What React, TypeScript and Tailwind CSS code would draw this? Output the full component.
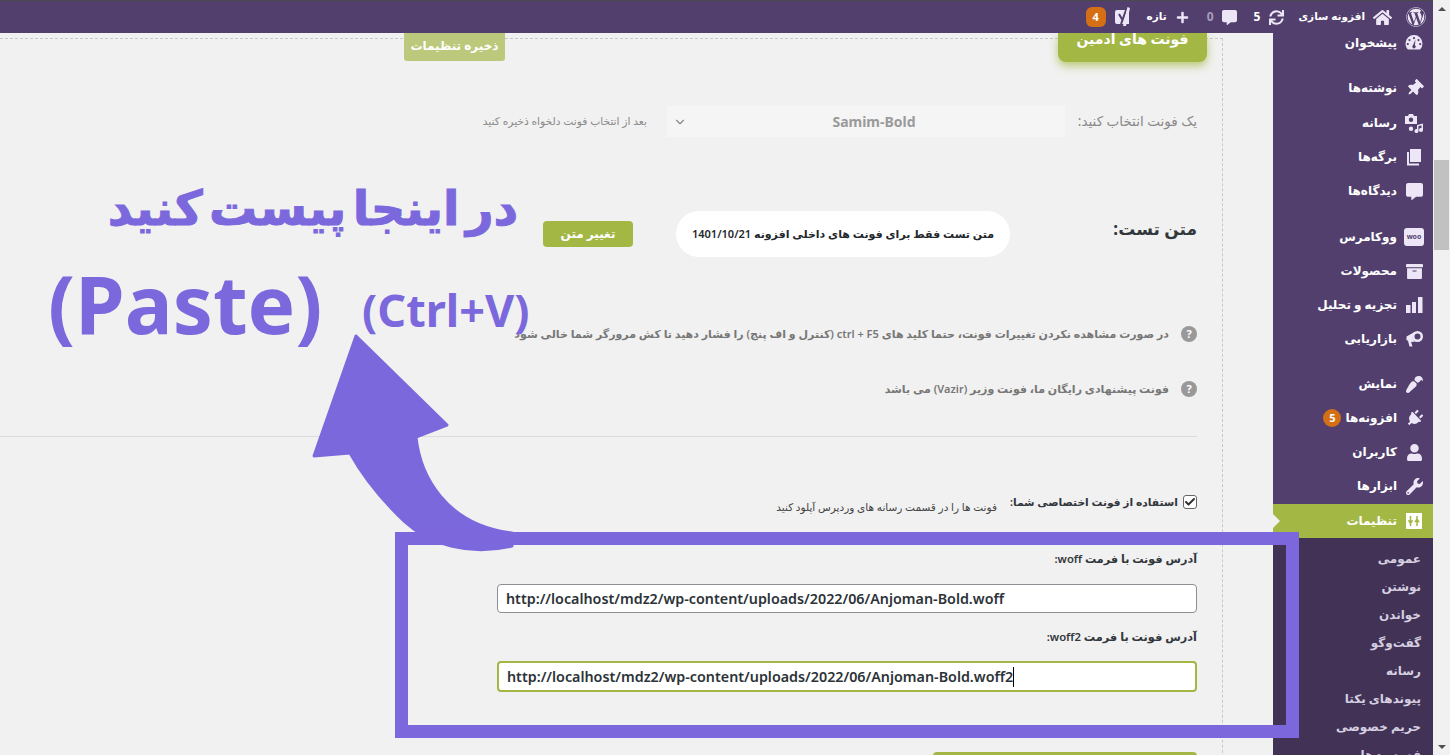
import type { ReactNode } from "react";
import { FaArchive, FaCommentAlt, FaHome, FaPaintBrush, FaPlug, FaPlus, FaSync, FaThumbtack, FaUser, FaWordpress, FaWrench } from "react-icons/fa";
import { ChevronDown, Check } from "lucide-react";

const FONT = "font-['Noto_Sans','DejaVu_Sans',sans-serif]";

function GaugeIcon() {
    return (
        <svg width="20" height="20" viewBox="0 0 20 20" fill="#ece6f6">
            <path fillRule="evenodd" d="M10 2a8.5 8.5 0 0 0-8.5 8.500c0 2.300.9 4.400 2.400 6h12.200a8.500 8.500 0 0 0 2.400-6A8.500 8.500 0 0 0 10 2zM10 4a1.100 1.100 0 1 1 0 2.200A1.100 1.100 0 0 1 10 4zM5.500 6a1.100 1.100 0 1 1 0 2.200A1.100 1.100 0 0 1 5.500 6zm9 0a1.100 1.100 0 1 1 0 2.200 1.100 1.100 0 0 1 0-2.200zM3.800 10a1.100 1.100 0 1 1 0 2.200 1.100 1.100 0 0 1 0-2.200zm12.400 0a1.100 1.100 0 1 1 0 2.200 1.100 1.100 0 0 1 0-2.200zM11.500 6.500l-.6 5.600a1.700 1.700 0 1 1-1.800 0z" />
        </svg>
    );
}

function MediaIcon() {
    return (
        <svg width="20" height="20" viewBox="0 0 20 20" fill="#ece6f6">
            <path fillRule="evenodd" d="M1 3h3l1-2h4l1 2h3v8H1zM7 4.500a2.200 2.200 0 1 0 0 4.400 2.200 2.200 0 0 0 0-4.400z" />
            <path d="M13 12l6-1.500V17a2 2 0 1 1-1.500-1.900V12.400L14.500 13v5a2 2 0 1 1-1.500-1.900zM7 13.500a2.200 2.200 0 1 1 0 4.400 2.200 2.200 0 0 1 0-4.400z" />
        </svg>
    );
}

function PagesIcon() {
    return (
        <svg width="20" height="20" viewBox="0 0 20 20" fill="#ece6f6">
            <path d="M6 2h11v13H6z" />
            <path d="M3 5h2v11.500h10V18.500H3z" />
        </svg>
    );
}

function BarsIcon() {
    return (
        <svg width="20" height="20" viewBox="0 0 20 20" fill="#ece6f6">
            <path d="M2 10h4.500v8H2zM8 7h4v11H8zM14 2h4.500v16H14z" />
        </svg>
    );
}

function MegaphoneIcon() {
    return (
        <svg width="20" height="20" viewBox="0 0 20 20" fill="#ece6f6">
            <path fillRule="evenodd" d="M13.500 2a5.500 5.500 0 1 1 0 11 5.500 5.500 0 0 1 0-11zm0 2.500a3 3 0 1 0 0 6 3 3 0 0 0 0-6z" />
            <path d="M11 2.800L2.500 7.500v3.500L4 11.800l1.500 5.700h3l-1.400-4.500 4-.2a6 6 0 0 1-2.600-5z" />
        </svg>
    );
}

function SlidersIcon() {
    return (
        <svg width="16" height="16" viewBox="0 0 16 16">
            <rect width="16" height="16" fill="#ffffff" />
            <path d="M4.500 3v5M3 8h3l-1.500 2.500zM4.500 10v3M11 3v3M9.500 8.500h3L11 6zM11 8.500V13" stroke="#a3b745" strokeWidth="1.500" fill="#a3b745" />
        </svg>
    );
}

function YoastIcon() {
    return (
        <svg width="18" height="20" viewBox="0 0 18 20">
            <path d="M3 3h12v14H3a2 2 0 0 1-2-2V5a2 2 0 0 1 2-2z" fill="#ece6f6" />
            <path d="M5 7l3.500 6L12 3M8.500 13L7 17" stroke="#523f6d" strokeWidth="2" fill="none" />
            <path d="M13.500 0L9 19h3L16 1z" fill="#ece6f6" />
        </svg>
    );
}

function WooIcon() {
    return (
        <div dir="ltr" className="w-[20px] h-[18px] rounded-[3px] bg-[#ece6f6] text-[#523f6d] text-[7px] leading-[18px] text-center font-bold font-['Noto_Sans',sans-serif]">woo</div>
    );
}

type MenuItem = { label: string; icon: ReactNode; badge?: string };

const ico = { size: 17, color: "#ece6f6" };

const MENU: MenuItem[] = [
    { label: "پیشخوان", icon: <GaugeIcon /> },
    { label: "نوشته‌ها", icon: <FaThumbtack {...ico} className="rotate-45" /> },
    { label: "رسانه", icon: <MediaIcon /> },
    { label: "برگه‌ها", icon: <PagesIcon /> },
    { label: "دیدگاه‌ها", icon: <FaCommentAlt {...ico} /> },
    { label: "ووکامرس", icon: <WooIcon /> },
    { label: "محصولات", icon: <FaArchive {...ico} /> },
    { label: "تجزیه و تحلیل", icon: <BarsIcon /> },
    { label: "بازاریابی", icon: <MegaphoneIcon /> },
    { label: "نمایش", icon: <FaPaintBrush {...ico} className="rotate-180" /> },
    { label: "افزونه‌ها", icon: <FaPlug {...ico} className="rotate-45" />, badge: "5" },
    { label: "کاربران", icon: <FaUser {...ico} /> },
    { label: "ابزارها", icon: <FaWrench {...ico} /> },
];

const SUBMENU = ["عمومی", "نوشتن", "خواندن", "گفت‌وگو", "رسانه", "پیوندهای یکتا", "حریم خصوصی", "فهرست‌ها"];

function MenuRow({ item, className }: { item: MenuItem; className: string }) {
    return (
        <div className={"flex items-center text-white text-[12px] font-bold whitespace-nowrap " + className}>
            <div className="w-[36px] pr-[2px] flex justify-center shrink-0">{item.icon}</div>
            <span>{item.label}</span>
            {item.badge && <span className="mr-[4px] w-[18px] h-[18px] rounded-full bg-[#d46f15] text-[11px] text-center leading-[18px]">{item.badge}</span>}
        </div>
    );
}

function Sidebar() {
    return (
        <aside className="w-[160px] shrink-0 bg-[#523f6d] overflow-hidden">
            <div className="-mt-[7px]">
                <MenuRow item={MENU[0]} className="h-[34px]" />
                <MenuRow item={MENU[1]} className="h-[34px] mt-[11px]" />
                <MenuRow item={MENU[2]} className="h-[34px] mt-px" />
                <MenuRow item={MENU[3]} className="h-[34px]" />
                <MenuRow item={MENU[4]} className="h-[34px]" />
                <MenuRow item={MENU[5]} className="h-[34px] mt-[12px]" />
                <MenuRow item={MENU[6]} className="h-[34px]" />
                <MenuRow item={MENU[7]} className="h-[34px]" />
                <MenuRow item={MENU[8]} className="h-[34px]" />
                <MenuRow item={MENU[9]} className="h-[34px] mt-[11px]" />
                <MenuRow item={MENU[10]} className="h-[34px]" />
                <MenuRow item={MENU[11]} className="h-[34px]" />
                <MenuRow item={MENU[12]} className="h-[34px]" />
                <div className="relative h-[34px] mt-px bg-[#a3b745] flex items-center text-white text-[12px] font-bold">
                    <div className="w-[36px] pr-[2px] flex justify-center shrink-0"><SlidersIcon /></div>
                    <span>تنظیمات</span>
                    <div className="absolute left-0 top-[10px] border-y-[7px] border-y-transparent border-l-[7px] border-l-[#f1f1f1]" />
                </div>
                <div className="bg-[#413256] pt-[7px] pb-[7px] pr-[12px] text-[#d5cfe0] text-[12px] font-semibold">
                    {SUBMENU.map(s => <div className="h-[28px] leading-[28px] whitespace-nowrap" key={s}>{s}</div>)}
                </div>
            </div>
        </aside>
    );
}

function TopBar() {
    return (
        <header className="h-[33px] shrink-0 bg-[#523f6d] border-t border-t-[#4a4a4a] flex items-center text-white text-[10.5px] font-bold whitespace-nowrap pr-[7px]">
            <FaWordpress size={20} color="#ece6f6" />
            <FaHome size={19} color="#ece6f6" className="mr-[14px]" />
            <span className="mr-[8px]">افزونه سازی</span>
            <FaSync size={15} color="#ece6f6" className="mr-[14px]" />
            <span className="mr-[9px] text-[12px]">5</span>
            <FaCommentAlt size={15} color="#ece6f6" className="mr-[17px]" />
            <span className="mr-[8px] text-[12px] text-[#a99cbd]">0</span>
            <FaPlus size={13} color="#ece6f6" className="mr-[18px]" />
            <span className="mr-[9px]">تازه</span>
            <div className="mr-[15px]"><YoastIcon /></div>
            <span className="mr-[8px] w-[20px] h-[20px] rounded-md bg-[#d46f15] text-[11px] text-center leading-[20px]">4</span>
        </header>
    );
}

function HelpDot() {
    return <span className="w-[16px] h-[16px] rounded-full bg-[#999] text-white text-[11px] font-bold leading-[16px] text-center shrink-0">?</span>;
}

function UrlField({ value, focused }: { value: string; focused?: boolean }) {
    return (
        <div dir="ltr" className={"w-[700px] bg-white rounded-[4px] flex items-center pl-[8px] text-[14.3px] font-semibold text-[#2c3338] " + (focused ? "h-[31px] border-2 border-[#a3b745]" : "h-[29px] border border-[#8c8f94]")}>
            <span>{value}</span>
            {focused && <span className="w-px h-[20px] bg-black" />}
        </div>
    );
}

function Content() {
    return (
        <main className="flex-1 min-w-0 pt-[5px] bg-[#f1f1f1] overflow-hidden">
            <div className="mr-[50px] border-t border-r border-dashed border-[#c8c8c8] pr-[25px] min-h-[800px]">
                <div className="-mt-[6px] -mr-[10px] flex h-[29px]">
                    <div className="w-[149px] h-[29px] rounded-b-lg bg-[#a3b745] shadow-[0_4px_8px_rgba(163,183,69,0.7)] text-white text-[14px] font-bold text-center leading-[11px]">فونت های ادمین</div>
                    <div className="mr-[553px] w-[101px] h-[28px] rounded-b-[3px] bg-[#bcc97c] text-white text-[12px] font-bold text-center leading-[26px]">ذخیره تنظیمات</div>
                </div>

                <div className="mt-[44px] h-[31px] flex items-center whitespace-nowrap">
                    <div className="w-[132px] text-[13.5px] text-[#8a8a8a]">یک فونت انتخاب کنید:</div>
                    <div className="w-[398px] h-[31px] pl-[16px] bg-[#f5f5f5] relative flex items-center justify-center">
                        <span className="text-[14px] font-bold text-[#9a9a9a]">Samim-Bold</span>
                        <ChevronDown size={14} color="#888" className="absolute left-[6px] top-[9px]" />
                    </div>
                    <div className="mr-[20px] text-[10.7px] text-[#8a8a8a]">بعد از انتخاب فونت دلخواه ذخیره کنید</div>
                </div>

                <div className="mt-[74px] h-[46px] flex items-center whitespace-nowrap">
                    <div className="w-[187px] pb-[11px] text-[17px] font-bold text-[#32373c]">متن تست:</div>
                    <div className="w-[334px] h-[46px] rounded-[23px] bg-white flex items-center justify-center text-[11px] font-semibold text-[#23282d]">متن تست فقط برای فونت های داخلی افزونه 1401/10/21</div>
                    <div className="mr-[43px] w-[90px] h-[26px] rounded-[4px] bg-[#a3b745] text-white text-[12px] font-bold text-center leading-[26px]">تغییر متن</div>
                </div>

                <div className="mt-[67px] h-[20px] flex items-center gap-[12px] whitespace-nowrap text-[11px] font-semibold text-[#777]">
                    <HelpDot />
                    <span>در صورت مشاهده نکردن تغییرات فونت، حتما کلید های ctrl + F5 (کنترل و اف پنج) را فشار دهید تا کش مرورگر شما خالی شود</span>
                </div>
                <div className="mt-[35px] h-[20px] flex items-center gap-[12px] whitespace-nowrap text-[11px] font-semibold text-[#777]">
                    <HelpDot />
                    <span>فونت پیشنهادی رایگان ما، فونت وزیر (Vazir) می باشد</span>
                </div>

                <div className="mt-[37px] border-t border-[#dcdcdc]" />

                <div className="mt-[58px] h-[14px] flex items-center whitespace-nowrap">
                    <div className="w-[14px] h-[14px] rounded-[3px] border border-[#666] bg-white flex items-center justify-center">
                        <Check size={12} strokeWidth={4} color="#333" />
                    </div>
                    <span className="mr-[5px] text-[10.7px] font-semibold text-[#32373c]">استفاده از فونت اختصاصی شما:</span>
                    <span className="mr-[13px] mt-[11px] text-[10.5px] text-[#444]">فونت ها را در قسمت رسانه های وردپرس آپلود کنید</span>
                </div>

                <div className="mt-[40px] h-[20px] text-[11.2px] font-semibold text-[#32373c] leading-[20px]">آدرس فونت با فرمت woff:</div>
                <div className="mt-[15px]"><UrlField value="http://localhost/mdz2/wp-content/uploads/2022/06/Anjoman-Bold.woff" /></div>
                <div className="mt-[14px] h-[20px] text-[11.3px] font-semibold text-[#32373c] leading-[20px]">آدرس فونت با فرمت woff2:</div>
                <div className="mt-[14px]"><UrlField value="http://localhost/mdz2/wp-content/uploads/2022/06/Anjoman-Bold.woff2" focused /></div>
                <div className="mt-[60px] w-[264px] h-[30px] rounded-[4px] bg-[#a3b745]" />
            </div>
        </main>
    );
}

function Scrollbar() {
    return (
        <div className="w-[17px] shrink-0 bg-[#f1f1f1] flex flex-col items-center">
            <div className="h-[17px] flex items-center justify-center">
                <div className="border-x-[4px] border-x-transparent border-b-[4px] border-b-[#505050]" />
            </div>
            <div className="mt-[143px] w-[15px] h-[90px] bg-[#c1c1c1]" />
            <div className="mt-auto h-[17px] flex items-center justify-center">
                <div className="border-x-[4px] border-x-transparent border-t-[4px] border-t-[#505050]" />
            </div>
        </div>
    );
}

function Annotation() {
    return (
        <>
            <div dir="rtl" className="absolute left-[107px] top-[172px] w-[412px] text-center whitespace-nowrap text-[48px] leading-[70px] font-bold text-[#7b68dd] [word-spacing:-6px] [-webkit-text-stroke:1px_#7b68dd]">در اینجا پیست کنید</div>
            <div dir="ltr" className="absolute left-[48px] top-[250px] text-[80px] leading-[106px] font-bold text-[#7b68dd] whitespace-nowrap">(Paste)</div>
            <div dir="ltr" className="absolute left-[362px] top-[278px] text-[45px] leading-[64px] font-bold text-[#7b68dd] whitespace-nowrap">(Ctrl+V)</div>
            <svg className="absolute left-0 top-0" width="1450" height="755" viewBox="0 0 1450 755">
                <path d="M356 336L447 425L416 437C420 475 445 525 512 533V546C470 556 430 545 405 522C385 503 365 480 350 453L314 456Z" fill="#7b68dd" stroke="#7b68dd" strokeWidth="3" strokeLinejoin="round" />
            </svg>
            <div className="absolute left-[395px] top-[532px] w-[904px] h-[206px] border-[13px] border-[#7c68dc]" />
        </>
    );
}

export default function App() {
    return (
        <div dir="ltr" className={"relative w-[1450px] h-[755px] overflow-hidden flex bg-[#f1f1f1] " + FONT}>
            <div dir="rtl" className="flex-1 min-w-0 flex flex-col">
                <TopBar />
                <div className="flex-1 min-h-0 flex">
                    <Sidebar />
                    <Content />
                </div>
            </div>
            <Scrollbar />
            <Annotation />
        </div>
    );
}
